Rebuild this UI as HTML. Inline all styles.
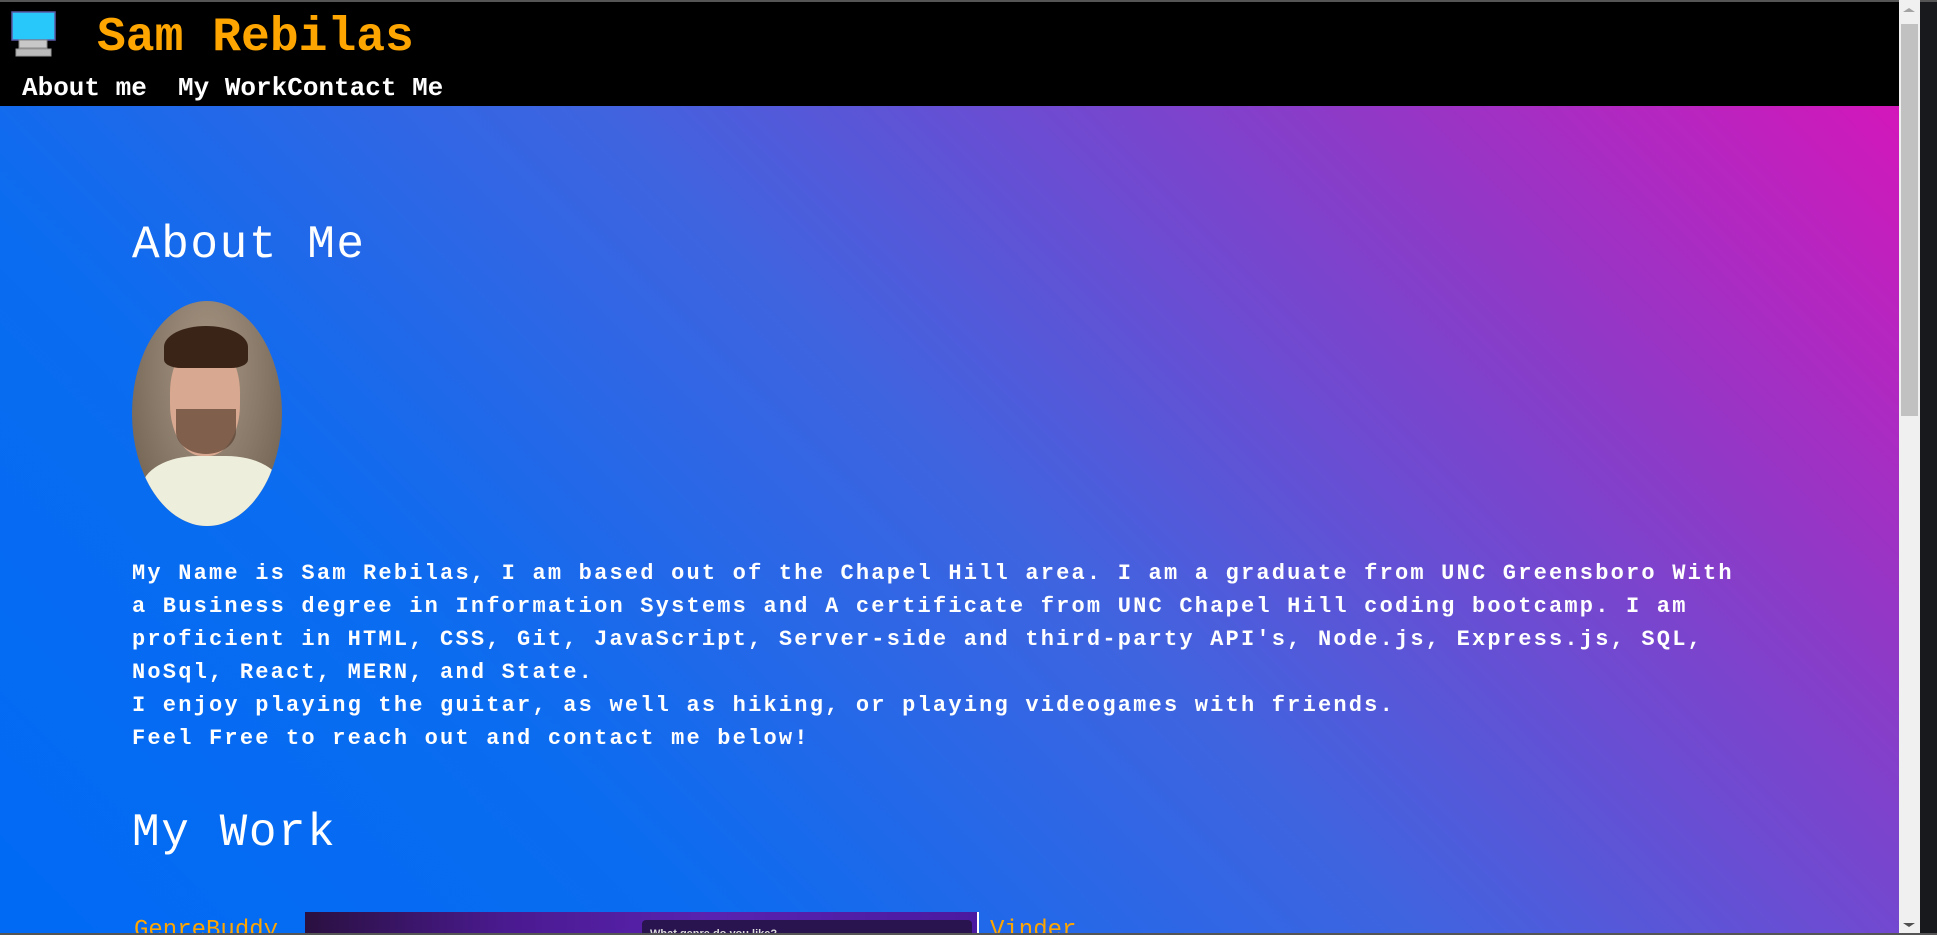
<!DOCTYPE html>
<html><head><meta charset="utf-8"><style>
*{margin:0;padding:0;box-sizing:border-box}
html,body{width:1937px;height:935px;overflow:hidden;background:#18191d}
#page{position:absolute;left:0;top:0;width:1899px;height:933px;overflow:hidden;
background:linear-gradient(225deg,#e010b8 0%,#8a3cc8 25%,#3f64e0 50%,#0a6cf0 75%,#006af5 100%);
font-family:"Liberation Mono","Courier New",monospace}
#top{position:absolute;left:0;top:0;width:1937px;height:2px;background:#555}
header{position:absolute;left:0;top:2px;width:1899px;height:104px;background:#000}
.title{position:absolute;left:97px;top:8px;font-size:48px;font-weight:bold;color:#ffa500;line-height:56px}
nav{position:absolute;left:22px;top:71px;font-size:26px;font-weight:bold;color:#fff;line-height:30px;white-space:pre}
h2{position:absolute;left:132px;font-size:46px;font-weight:normal;color:#fff;letter-spacing:1.6px}
.photo{position:absolute;left:132px;top:301px;width:150px;height:225px;border-radius:50%;
background:radial-gradient(ellipse at 50% 30%,#a89683 0%,#8a7a6a 50%,#6a5a4a 100%);overflow:hidden}
p{position:absolute;left:132px;top:557px;width:1630px;font-size:22px;font-weight:bold;color:#fff;line-height:33px;letter-spacing:2.2px}
.lnk{position:absolute;font-size:24px;color:#ffa500;top:917px}
#sb{position:absolute;left:1899px;top:0;width:21px;height:933px;background:#f0f0f0}
#thumb{position:absolute;left:1901px;top:24px;width:17px;height:392px;background:#c1c1c1}
#bot{position:absolute;left:0;top:933px;width:1937px;height:2px;background:#555}
</style></head><body>
<div id="page">
<header>
<svg style="position:absolute;left:11px;top:9px" width="45" height="46" viewBox="0 0 45 46">
<rect x="1" y="1" width="43" height="28" fill="#28c8fa" stroke="#5a5aa8" stroke-width="1.5"/>
<rect x="8" y="29" width="28" height="8" fill="#c8c8c8" stroke="#888"/>
<rect x="5" y="38" width="35" height="7" fill="#bbb" stroke="#999"/>
</svg>
<div class="title">Sam Rebilas</div>
<nav>About me  My WorkContact Me</nav>
</header>
<h2 style="top:219px">About Me</h2>
<div class="photo">
<div style="position:absolute;left:10px;top:155px;width:140px;height:80px;background:#eeeedd;border-radius:40% 40% 0 0"></div>
<div style="position:absolute;left:38px;top:40px;width:70px;height:115px;background:#d9a890;border-radius:45%"></div>
<div style="position:absolute;left:32px;top:25px;width:84px;height:42px;background:#3a2418;border-radius:50% 50% 20% 20%"></div>
<div style="position:absolute;left:44px;top:108px;width:60px;height:45px;background:#5a4030;border-radius:0 0 50% 50%;opacity:.7"></div>
</div>
<p>My Name is Sam Rebilas, I am based out of the Chapel Hill area. I am a graduate from UNC Greensboro With a Business degree in Information Systems and A certificate from UNC Chapel Hill coding bootcamp. I am proficient in HTML, CSS, Git, JavaScript, Server-side and third-party API's, Node.js, Express.js, SQL, NoSql, React, MERN, and State.<br>I enjoy playing the guitar, as well as hiking, or playing videogames with friends.<br>Feel Free to reach out and contact me below!</p>
<h2 style="top:807px">My Work</h2>
<div class="lnk" style="left:134px">GenreBuddy</div>
<div style="position:absolute;left:305px;top:912px;width:673px;height:30px;background:linear-gradient(90deg,#2a1040 0%,#4a1a90 30%,#5a22b0 60%,#4a1aa0 100%)">
<div style="position:absolute;left:337px;top:8px;width:330px;height:30px;background:#2a1450;border-radius:4px;color:#ddd;font-family:'Liberation Sans',sans-serif;font-size:11px;font-weight:bold;padding:8px 8px">What genre do you like?</div>
</div>
<div style="position:absolute;left:977px;top:912px;width:2px;height:30px;background:#fff"></div>
<div class="lnk" style="left:990px">Vinder</div>
</div>
<div id="top"></div>
<div id="sb"></div><div id="thumb"></div>
<div style="position:absolute;left:1903px;top:8px;width:0;height:0;border-left:6px solid transparent;border-right:6px solid transparent;border-bottom:4px solid #a3a3a3"></div>
<div style="position:absolute;left:1903px;top:923px;width:0;height:0;border-left:6px solid transparent;border-right:6px solid transparent;border-top:4px solid #505050"></div>
<div id="bot"></div>
</body></html>
